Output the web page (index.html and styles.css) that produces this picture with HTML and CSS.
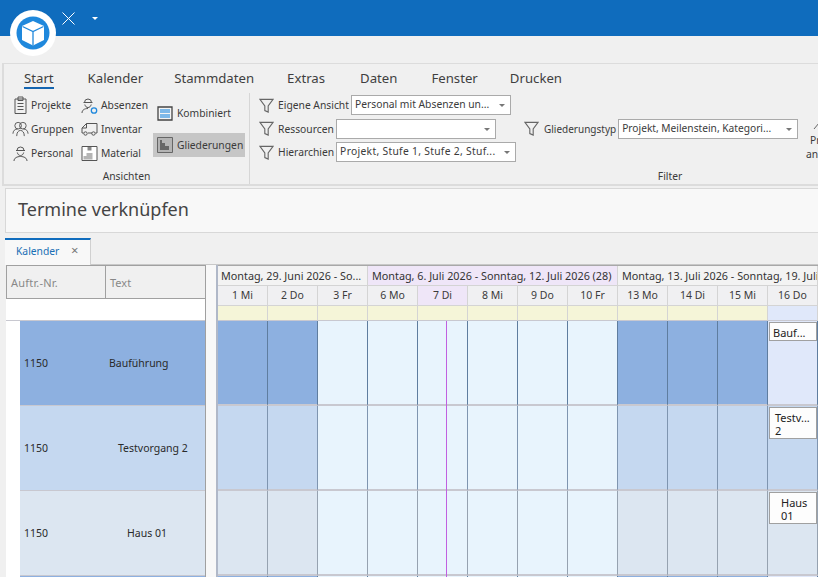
FILE: index.html
```html
<!DOCTYPE html>
<html lang="de">
<head>
    <meta charset="UTF-8">
    <meta name="viewport" content="width=device-width, initial-scale=1.0">
    <title>Termine verknüpfen</title>
    <link rel="stylesheet" href="styles.css">
</head>
<body>
    <svg class="sprites" width="0" height="0">
        <symbol id="i-filter" viewBox="0 0 16 16"><path d="M1 1.500h14L9.800 8.500v6.500l-3.600-1.600V8.500z" fill="none" stroke="#666" stroke-width="1.200"/></symbol>
    </svg>
    <header class="titlebar">
        <div class="logo">
            <svg viewBox="0 0 46 46" width="46" height="46">
                <circle cx="23" cy="23" r="23" fill="#fff"/>
                <circle cx="23" cy="23" r="16.500" fill="#1f88dc"/>
                <path d="M23 11l11 5v14l-11 5.500L12 30V16z" fill="#fff"/>
                <path d="M12.500 16.500L23 21.500l10.500-5M23 21.500v14" fill="none" stroke="#1f88dc" stroke-width="1.300"/>
            </svg>
        </div>
        <svg class="close" viewBox="0 0 13 13" width="13" height="13"><path d="M.500.500l12 12M12.500.500l-12 12" stroke="#fff" fill="none"/></svg>
        <span class="caret"></span>
    </header>

    <section class="ribbon">
        <nav class="tabs">
            <a class="tab tab-start">Start</a>
            <a class="tab tab-kal">Kalender</a>
            <a class="tab tab-stamm">Stammdaten</a>
            <a class="tab tab-extras">Extras</a>
            <a class="tab tab-daten">Daten</a>
            <a class="tab tab-fenster">Fenster</a>
            <a class="tab">Drucken</a>
        </nav>
        <div class="groups">
            <div class="group group-views">
                <div class="views">
                    <div class="view-col col-a">
                        <div class="item"><svg viewBox="0 0 16 18" width="16" height="18"><path d="M2.500 3h11v14.500h-11zM5.500 1h5v3.500h-5zM5 7.500h6M5 10.500h6M5 13.500h6" fill="none" stroke="#555"/></svg>Projekte</div>
                        <div class="item"><svg viewBox="0 0 18 16" width="18" height="16"><circle cx="6.500" cy="4.500" r="3.500" fill="none" stroke="#555"/><circle cx="11.500" cy="4.500" r="3.500" fill="none" stroke="#555"/><path d="M1 13c0-3 2-5 5-5M17 13c0-3-2-5-5-5M5 15.500c0-3.500 1.500-6 4-6s4 2.500 4 6" fill="none" stroke="#555"/></svg>Gruppen</div>
                        <div class="item"><svg viewBox="0 0 16 17" width="16" height="17"><path d="M4.500 5.500a3.500 3.500 0 0 1 7 0zM3.500 5.500h9M4.800 7.500c.5 2 1.700 3 3.200 3s2.700-1 3.200-3M1.500 16c0-3 3-4.500 6.500-4.500s6.500 1.500 6.500 4.500" fill="none" stroke="#555"/></svg>Personal</div>
                    </div>
                    <div class="view-col col-b">
                        <div class="item"><svg viewBox="0 0 17 17" width="17" height="17"><path d="M3.500 5.500a3.500 3.500 0 0 1 7 0zM2.500 5.500h9M3.800 7.500c.5 2 1.700 3 3.200 3s2.700-1 3.200-3M1 16c0-3 2.500-4.500 6-4.500" fill="none" stroke="#555"/><circle cx="13" cy="13.500" r="2.700" fill="none" stroke="#1f88dc" stroke-width="1.300"/></svg>Absenzen</div>
                        <div class="item"><svg viewBox="0 0 17 14" width="17" height="14"><path d="M5.500 1.500h10.500v9.500H14.500M5.500 1.500L1 6v5h1.500M7 11h4M5.500 1.500V6H1" fill="none" stroke="#555"/><circle cx="4.500" cy="11.500" r="1.700" fill="none" stroke="#555"/><circle cx="12.500" cy="11.500" r="1.700" fill="none" stroke="#555"/></svg>Inventar</div>
                        <div class="item"><svg viewBox="0 0 16 15" width="16" height="15"><path d="M.500.500h15v14H.500z" fill="#fff" stroke="#555"/><path d="M2 13.500V10h3V7h6v6.500z" fill="#b5b5b5"/><path d="M6 1h4v3.500H6z" fill="#888"/></svg>Material</div>
                    </div>
                    <div class="view-col col-c">
                        <div class="big-item"><svg viewBox="0 0 16 15" width="16" height="15"><path d="M1 1h14v13H1z" fill="#f4f4f4" stroke="#444" stroke-width="1.300"/><path d="M3 3h10v4H3zM3 8h10v4H3z" fill="#7db8e8"/></svg>Kombiniert</div>
                        <div class="big-item active"><svg viewBox="0 0 16 16" width="16" height="16"><path d="M.500.500h15v15H.500z" fill="#b4b4b4" stroke="#666"/><path d="M3 3h2v3h3v3h4v4H3z" fill="#666"/></svg>Gliederungen</div>
                    </div>
                </div>
                <div class="group-label">Ansichten</div>
            </div>

            <div class="group group-filter">
                <div class="filters">
                    <div class="filter-col">
                        <div class="filter"><svg class="funnel" width="15" height="15"><use href="#i-filter"/></svg><label>Eigene Ansicht</label><div class="combo combo-a"><span>Personal mit Absenzen un...</span></div></div>
                        <div class="filter"><svg class="funnel" width="15" height="15"><use href="#i-filter"/></svg><label>Ressourcen</label><div class="combo combo-b"><span></span></div></div>
                        <div class="filter"><svg class="funnel" width="15" height="15"><use href="#i-filter"/></svg><label>Hierarchien</label><div class="combo combo-c"><span>Projekt, Stufe 1, Stufe 2, Stuf...</span></div></div>
                    </div>
                    <div class="filter-col col-type">
                        <div class="filter"><svg class="funnel" width="15" height="15"><use href="#i-filter"/></svg><label>Gliederungstyp</label><div class="combo combo-d"><span>Projekt, Meilenstein, Kategori...</span></div></div>
                    </div>
                    <div class="clipped">
                        <svg viewBox="0 0 10 8" width="10" height="8"><path d="M1 7l5-6" stroke="#666" fill="none"/></svg>
                        <div class="clip-a">Pr</div>
                        <div class="clip-b">an</div>
                    </div>
                </div>
                <div class="group-label">Filter</div>
            </div>
        </div>
    </section>

    <section class="heading">Termine verknüpfen</section>

    <div class="doc-tabs">
        <div class="doc-tab">Kalender <span class="doc-x">×</span></div>
    </div>

    <main class="board">
        <div class="list">
            <div class="list-head">
                <div class="lh-nr">Auftr.-Nr.</div>
                <div>Text</div>
            </div>
            <div class="list-blank"></div>
            <div class="list-row row-1"><span class="nr">1150</span><span class="txt">Bauführung</span></div>
            <div class="list-row row-2"><span class="nr">1150</span><span class="txt">Testvorgang 2</span></div>
            <div class="list-row row-3"><span class="nr">1150</span><span class="txt">Haus 01</span></div>
            <div class="list-row row-1"></div>
        </div>

        <div class="calendar">
            <div class="weeks">
                <div class="week week-1">Montag, 29. Juni 2026 - So...</div>
                <div class="week week-2">Montag, 6. Juli 2026 - Sonntag, 12. Juli 2026 (28)</div>
                <div class="week week-3">Montag, 13. Juli 2026 - Sonntag, 19. Juli</div>
            </div>
            <div class="cal-grid" id="cal"></div>
            <div class="now-line"></div>
        </div>
    </main>

    <script>
        const tage = ["1 Mi", "2 Do", "3 Fr", "6 Mo", "7 Di", "8 Mi", "9 Do", "10 Fr", "13 Mo", "14 Di", "15 Mi", "16 Do"]
        const belegt = [0, 1, 8, 9, 10]
        const zeilen = [
            { klasse: "r1", karte: ["Bauf..."], kartenKlasse: "card-a" },
            { klasse: "r2", karte: ["Testv...", "2"], kartenKlasse: "card-b" },
            { klasse: "r3", karte: ["Haus", "01"], kartenKlasse: "card-c" },
            { klasse: "r1" }
        ]
        const cal = document.querySelector("#cal")

        function zelle(klasse, text) {
            const el = document.createElement("div")
            el.className = klasse
            el.innerText = text || ""
            cal.appendChild(el)
            return el
        }

        tage.forEach((tag, i) => zelle(i == 4 ? "day day-today" : "day", tag))
        tage.forEach((tag, i) => zelle(i == 11 ? "yellow yellow-free" : "yellow"))

        zeilen.forEach(zeile => {
            tage.forEach((tag, i) => {
                let klasse = "cell " + zeile.klasse
                if(belegt.includes(i)) klasse += " busy"
                else if(i == 11) klasse += " last"
                const el = zelle(klasse)
                if(i == 11 && zeile.karte) {
                    const karte = document.createElement("div")
                    karte.className = "card " + zeile.kartenKlasse
                    karte.innerHTML = zeile.karte.join("<br>")
                    el.appendChild(karte)
                }
            })
        })
    </script>
</body>
</html>
```

FILE: styles.css
```css
* {
    box-sizing: border-box;
    font-family: 'Noto Sans', 'Open Sans', sans-serif;
}
html, body {
    margin: 0;
    width: 818px;
    height: 577px;
    overflow: hidden;
    background: #f0f0f0;
    color: #3b3b3b;
    font-size: 10.300px;
}
.sprites {
    position: absolute;
}

/* titlebar */
.titlebar {
    position: relative;
    height: 36px;
    background: #0f6cbd;
}
.logo {
    position: absolute;
    left: 10px;
    top: 10px;
    width: 46px;
    height: 46px;
    z-index: 2;
}
.close {
    position: absolute;
    left: 62px;
    top: 12px;
}
.caret {
    position: absolute;
    left: 92px;
    top: 17px;
    border: 3px solid transparent;
    border-top: 3px solid #fff;
}

/* ribbon */
.ribbon {
    margin: 27px 0 0 2px;
    height: 123px;
    border: 2px solid #dcdcdc;
    border-right: 0;
    border-top-width: 1px;
    padding-top: 5px;
    overflow: hidden;
}
.tabs {
    display: flex;
    padding-left: 20px;
    height: 24px;
}
.tab {
    font-size: 13.200px;
    line-height: 18px;
    height: 18px;
    color: #3f3f3f;
    margin-right: 32px;
    white-space: nowrap;
}
.tab-start {
    height: 20px;
    border-bottom: 2px solid #1565b0;
    margin-right: 34px;
}
.tab-kal { margin-right: 31px; }
.tab-stamm { margin-right: 33px; }
.tab-extras { margin-right: 35px; }
.tab-daten { margin-right: 34px; }
.groups {
    display: flex;
    height: 91px;
}
.group {
    display: flex;
    flex-direction: column;
    flex: none;
}
.group-views {
    width: 246px;
    border-right: 1px solid #d6d6d6;
}
.group-filter {
    width: 840px;
}
.group-label {
    text-align: center;
    height: 15px;
    line-height: 14px;
    margin-top: auto;
}
.views {
    display: flex;
    padding: 3px 0 0 8px;
}
.view-col {
    display: flex;
    flex-direction: column;
    gap: 6px;
}
.col-a { width: 69px; }
.col-b { width: 72px; }
.col-b .item { gap: 3px; }
.col-c { gap: 8px; padding-top: 5px; }
.item {
    display: flex;
    align-items: center;
    gap: 2px;
    height: 18px;
    white-space: nowrap;
}
.item svg {
    width: 17px;
    flex: none;
}
.big-item {
    display: flex;
    align-items: center;
    gap: 4px;
    width: 92px;
    height: 24px;
    padding-left: 4px;
    white-space: nowrap;
}
.big-item.active {
    background: #c6c6c6;
}
.filters {
    display: flex;
    padding: 2px 0 0 9px;
    height: 72px;
}
.filter-col {
    display: flex;
    flex-direction: column;
    gap: 3.500px;
    width: 265px;
}
.col-type {
    padding-top: 23.500px;
    width: 279px;
}
.col-type label {
    font-size: 10px;
    margin-left: 1px;
}
.filter {
    display: flex;
    align-items: center;
    gap: 2px;
    height: 20px;
    white-space: nowrap;
}
.filter .funnel {
    flex: none;
    margin-right: 2px;
}
.combo {
    position: relative;
    height: 20px;
    border: 1px solid #aaa;
    background: #fff;
    padding: 0 16px 0 3px;
    line-height: 17px;
    overflow: hidden;
}
.combo::after {
    content: "";
    position: absolute;
    right: 5px;
    top: 8px;
    border: 3px solid transparent;
    border-top: 3px solid #777;
}
.combo-a { width: 160px; }
.combo-b { width: 160px; }
.combo-c { width: 180px; letter-spacing: .3px; }
.combo-d { width: 180px; font-size: 10.200px; }
.clipped {
    width: 30px;
    line-height: 14px;
    padding-top: 27px;
    white-space: nowrap;
}
.clipped svg {
    display: block;
    margin: 0 0 3px 10px;
}
.clip-a { padding-left: 7px; }
.clip-b { padding-left: 3px; }

/* heading */
.heading {
    margin: 2px 0 0 5px;
    height: 45px;
    background: #f8f8f8;
    border: 1px solid #d8d8d8;
    border-right: 0;
    padding-left: 12px;
    font-size: 18px;
    line-height: 41px;
    color: #444;
}

/* doc tabs */
.doc-tabs {
    margin: 5px 0 0 5px;
    height: 27px;
    border-bottom: 1px solid #c8c8c8;
}
.doc-tab {
    width: 86px;
    height: 27px;
    background: #f8f8f8;
    border-top: 2px solid #0f6cbd;
    border-right: 1px solid #d0d0d0;
    color: #1a6fb5;
    line-height: 21px;
    padding-left: 11px;
}
.doc-x {
    color: #777;
    font-size: 13px;
    margin-left: 9px;
}

/* board */
.board {
    display: flex;
    margin-left: 6px;
    background: #f8f8f8;
    height: 312px;
}
.list {
    width: 200px;
    border-right: 1px solid #a0a0a0;
    background: #fff;
    flex: none;
}
.list-head {
    display: flex;
    height: 34px;
    border: 1px solid #a0a0a0;
    border-right: 0;
    background: #f0f0f0;
    color: #888;
    font-size: 11px;
    line-height: 34px;
    padding-left: 4px;
}
.list-head > div {
    padding-left: 4px;
}
.list-head > .lh-nr {
    width: 95px;
    padding-left: 0;
    letter-spacing: .2px;
    border-right: 1px solid #a0a0a0;
}
.list-blank {
    height: 22px;
    border-bottom: 1px solid #c8c8d0;
}
.list-row {
    display: flex;
    align-items: center;
    margin-left: 14px;
    height: 85px;
    border-bottom: 1px solid #c8c8d0;
    font-size: 10.500px;
    color: #2a2a2a;
}
.list-row .nr {
    width: 89px;
    padding-left: 4px;
}
.row-1 { background: #8db0e0; }
.row-2 { background: #c5d8f0; }
.row-3 { background: #dce6f1; }
.row-2 .txt { padding-left: 9px; }
.row-3 .txt { padding-left: 18px; }

.calendar {
    position: relative;
    margin-left: 10px;
    flex: 1;
    overflow: hidden;
    border-left: 2px solid #b0b8c8;
    background: #fff;
}
.weeks {
    display: flex;
    height: 21px;
    border-top: 1px solid #a8a8a8;
    white-space: nowrap;
    font-size: 10.800px;
    line-height: 19px;
    color: #333;
    background: #f3f3f3;
}
.week {
    padding-left: 4px;
    border-right: 1px solid #d4d4d4;
    border-bottom: 1px solid #d4d4d4;
    overflow: hidden;
}
.week-1 { width: 150px; flex: none; padding-left: 3px; }
.week-2 { width: 250px; flex: none; background: #efe6f8; }
.week-3 { flex: 1; }
.cal-grid {
    display: grid;
    grid-template-columns: repeat(12, 50px);
    grid-template-rows: 20px 15px 85px 85px 85px 85px;
}
.day {
    text-align: center;
    font-size: 10.500px;
    line-height: 19px;
    background: #f0f0f2;
    border-right: 1px solid #d4d4d4;
    border-bottom: 1px solid #d4d4d4;
}
.day-today { background: #efe6f8; }
.yellow {
    background: #f5f5d8;
    border-right: 1px solid #d4d4d4;
    border-bottom: 1px solid #c8c8d0;
}
.yellow-free { background: #e0e8fa; }
.cell {
    border-right: 1px solid #7f98b8;
    border-bottom: 2px solid #c8c8d0;
    background: #e8f4fd;
    padding: 1px 0 0 1px;
}
.cell.r1 { border-right-color: #5f7d9f; }
.cell.r2 { border-right-color: #7f95b0; }
.cell.r3 { border-right-color: #96a2b0; }
.cell.r1.busy { background: #8db0e0; }
.cell.r2.busy { background: #c5d8f0; }
.cell.r3.busy { background: #dce6f1; }
.cell.r1.last { background: #e0e8fa; }
.cell.r2.last { background: #c5d8f0; }
.cell.r3.last { background: #dce6f1; }
.card {
    width: 48px;
    min-height: 19px;
    background: #fdfdfd;
    border: 1px solid #a0a0a0;
    padding: 3px 2px 1px 3px;
    font-size: 11px;
    line-height: 13px;
    color: #222;
    white-space: nowrap;
}
.card-b { padding-left: 5px; }
.card-c { padding-left: 11px; }
.now-line {
    position: absolute;
    left: 228px;
    top: 56px;
    bottom: 0;
    width: 1px;
    background: #c060e0;
}
```
